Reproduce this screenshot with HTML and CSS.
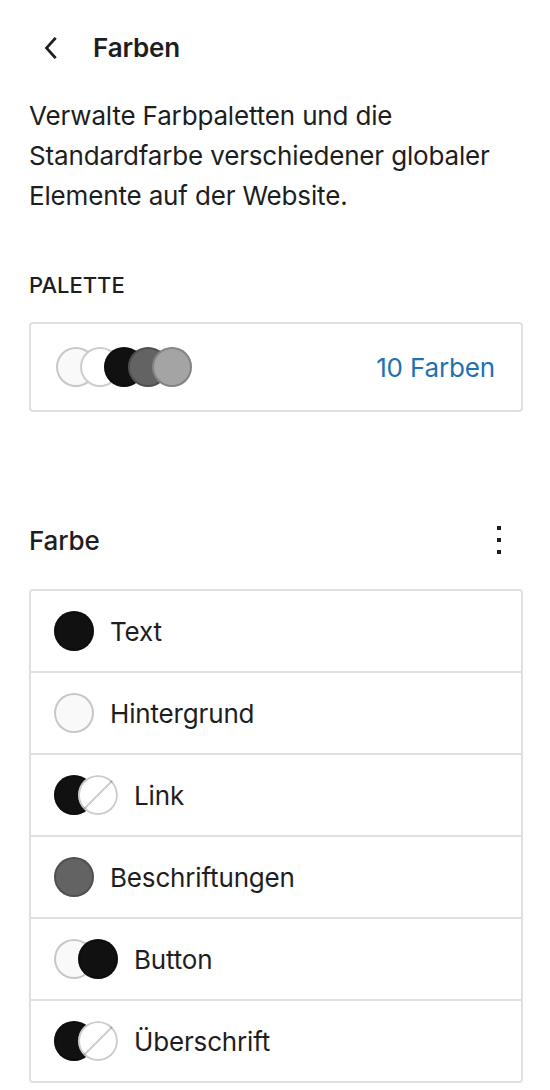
FILE: index.html
```html
<!DOCTYPE html>
<html lang="de">
<head>
<meta charset="utf-8">
<title>Farben</title>
<link rel="stylesheet" href="styles.css">
</head>
<body>
<div class="panel">
  <div class="header">
    <span class="back">
      <svg viewBox="0 0 24 24" width="44" height="44"><path d="M14.6 7l-1.2-1L8 12l5.4 6 1.2-1-4.6-5z" fill="#1e1e1e"/></svg>
    </span>
    <h2 class="title">Farben</h2>
  </div>
  <p class="desc">Verwalte Farbpaletten und die Standardfarbe verschiedener globaler Elemente auf der Website.</p>

  <h3 class="section-label">Palette</h3>
  <div class="palette-card">
    <div class="stack">
      <span class="swatch c-base"></span>
      <span class="swatch c-white"></span>
      <span class="swatch c-contrast"></span>
      <span class="swatch c-contrast2"></span>
      <span class="swatch c-contrast3"></span>
    </div>
    <span class="count">10 Farben</span>
  </div>

  <div class="group-head">
    <h3 class="group-title">Farbe</h3>
    <span class="more">
      <svg viewBox="0 0 24 24" width="48" height="48"><path d="M13 19h-2v-2h2v2zm0-6h-2v-2h2v2zm0-6h-2V5h2v2z" fill="#1e1e1e"/></svg>
    </span>
  </div>

  <div class="list">
    <div class="row">
      <div class="stack"><span class="swatch c-contrast"></span></div>
      <span class="label">Text</span>
    </div>
    <div class="row">
      <div class="stack"><span class="swatch c-base"></span></div>
      <span class="label">Hintergrund</span>
    </div>
    <div class="row">
      <div class="stack"><span class="swatch c-contrast"></span><span class="swatch c-none"></span></div>
      <span class="label">Link</span>
    </div>
    <div class="row">
      <div class="stack"><span class="swatch c-contrast2"></span></div>
      <span class="label">Beschriftungen</span>
    </div>
    <div class="row">
      <div class="stack"><span class="swatch c-base"></span><span class="swatch c-contrast"></span></div>
      <span class="label">Button</span>
    </div>
    <div class="row">
      <div class="stack"><span class="swatch c-contrast"></span><span class="swatch c-none"></span></div>
      <span class="label">Überschrift</span>
    </div>
  </div>
</div>
</body>
</html>
```

FILE: styles.css
```css
body {
  margin: 0;
  background: #fff;
  color: #1e1e1e;
  font-family: Inter, "Noto Sans", "Liberation Sans", sans-serif;
  letter-spacing: -0.01em;
}

.panel {
  padding: 24px 27px 0 29px;
}

.header {
  display: flex;
  align-items: center;
  height: 48px;
  gap: 19px;
}

.back {
  display: flex;
  width: 44px;
  height: 44px;
  margin-left: 1px;
}

.title {
  margin: 0;
  font-size: 26px;
  font-weight: 600;
  line-height: 48px;
}

.desc {
  margin: 24px 0 0;
  font-size: 26px;
  line-height: 40px;
}

.section-label {
  margin: 53px 0 0;
  font-size: 22px;
  font-weight: 500;
  line-height: 32px;
  text-transform: uppercase;
  letter-spacing: 0;
}

.palette-card {
  box-sizing: border-box;
  margin-top: 21px;
  height: 90px;
  border: 2px solid #e0e0e0;
  border-radius: 4px;
  display: flex;
  align-items: center;
  justify-content: space-between;
  padding: 0 26px 0 25px;
}

.stack {
  display: flex;
  align-items: center;
}

.swatch {
  display: block;
  width: 40px;
  height: 40px;
  border-radius: 50%;
  box-shadow: inset 0 0 0 2px rgba(0, 0, 0, 0.2);
}

.swatch + .swatch {
  margin-left: -16px;
}

.c-base { background: #f9f9f9; }
.c-white { background: #ffffff; }
.c-contrast { background: #111111; }
.c-contrast2 { background: #636363; }
.c-contrast3 { background: #a4a4a4; }
.c-none {
  background: #fff linear-gradient(-45deg, transparent 48.5%, #d0d0d0 48.5%, #d0d0d0 51.5%, transparent 51.5%);
}

.count {
  font-size: 26px;
  color: #2271b1;
}

.group-head {
  margin-top: 104px;
  height: 48px;
  display: flex;
  align-items: center;
  justify-content: space-between;
}

.group-title {
  margin: 0;
  font-size: 26px;
  font-weight: 500;
}

.more {
  display: flex;
  width: 48px;
  height: 48px;
}

.list {
  margin-top: 25px;
  border: 2px solid #e0e0e0;
  border-radius: 4px;
}

.row {
  height: 80px;
  display: flex;
  align-items: center;
  gap: 16px;
  padding: 0 23px;
}

.row + .row {
  border-top: 2px solid #e0e0e0;
}

.label {
  font-size: 26px;
}
```
